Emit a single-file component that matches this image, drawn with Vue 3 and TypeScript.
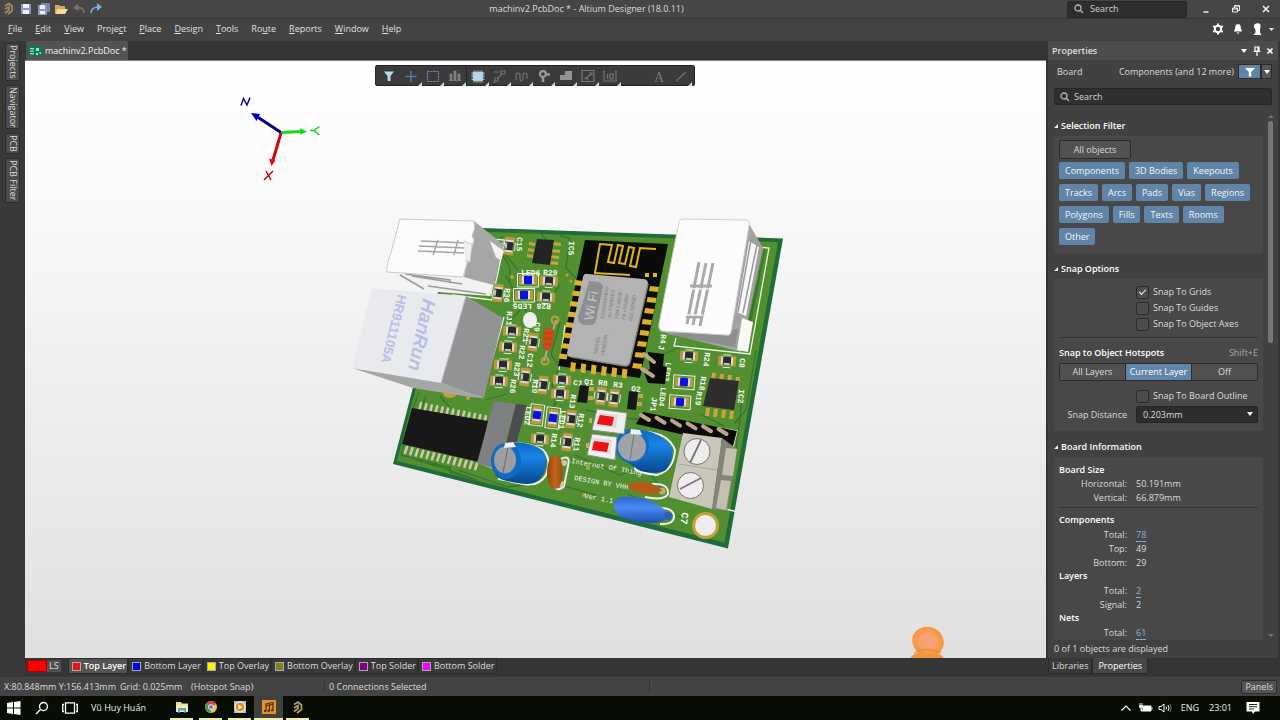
<script setup lang="ts">
import { ref } from 'vue'

interface Menu { label: string; key: number }
interface Layer { label: string; color: string }
interface Smd { x: number; y: number; a: number; led?: boolean }
interface Silk { t: string; x: number; y: number; a: number; s?: number }
interface Info { label: string; value: string; link?: boolean }

const menus: Menu[] = [
  { label: 'File', key: 0 }, { label: 'Edit', key: 0 }, { label: 'View', key: 0 },
  { label: 'Project', key: 5 }, { label: 'Place', key: 0 }, { label: 'Design', key: 0 },
  { label: 'Tools', key: 0 }, { label: 'Route', key: 2 }, { label: 'Reports', key: 0 },
  { label: 'Window', key: 0 }, { label: 'Help', key: 0 },
]
const sideTabs = ['Projects', 'Navigator', 'PCB', 'PCB Filter']
const layers: Layer[] = [
  { label: 'Top Layer', color: '#e81416' }, { label: 'Bottom Layer', color: '#0000f0' },
  { label: 'Top Overlay', color: '#f8f800' }, { label: 'Bottom Overlay', color: '#80801a' },
  { label: 'Top Solder', color: '#800080' }, { label: 'Bottom Solder', color: '#f800f8' },
]
const filters = ['Components', '3D Bodies', 'Keepouts', 'Tracks', 'Arcs', 'Pads', 'Vias', 'Regions', 'Polygons', 'Fills', 'Texts', 'Rooms', 'Other']
const snaps = ref([
  { label: 'Snap To Grids', on: true },
  { label: 'Snap To Guides', on: false },
  { label: 'Snap To Object Axes', on: false },
])
const outline = ref(false)
const hotspot = ref('Current Layer')
const activeLayer = ref('Top Layer')
const distance = ref('0.203mm')
const info: { title: string; rows: Info[]; rule?: boolean }[] = [
  { title: 'Board Size', rule: true, rows: [{ label: 'Horizontal:', value: '50.191mm' }, { label: 'Vertical:', value: '66.879mm' }] },
  { title: 'Components', rows: [{ label: 'Total:', value: '78', link: true }, { label: 'Top:', value: '49' }, { label: 'Bottom:', value: '29' }] },
  { title: 'Layers', rows: [{ label: 'Total:', value: '2', link: true }, { label: 'Signal:', value: '2' }] },
  { title: 'Nets', rows: [{ label: 'Total:', value: '61', link: true }] },
]
const tools = ['filter', 'plus', 'marquee', 'align', 'chip', 'route', 'tune', 'via', 'poly', 'dim', 'pad', 'gap', 'text', 'line']

const smds: Smd[] = [
  { x: 509, y: 246, a: 97 }, { x: 528, y: 280, a: 0, led: true }, { x: 549, y: 281, a: 3 },
  { x: 524, y: 295, a: 0, led: true }, { x: 546, y: 297, a: 3 }, { x: 498, y: 293, a: 97 },
  { x: 512, y: 331, a: 4 }, { x: 508, y: 347, a: 4 }, { x: 503, y: 365, a: 4 }, { x: 499, y: 381, a: 4 },
  { x: 533, y: 342, a: 97 }, { x: 525, y: 377, a: 97 }, { x: 543, y: 385, a: 97 },
  { x: 562, y: 380, a: 4 }, { x: 560, y: 394, a: 4 }, { x: 601, y: 396, a: 97 }, { x: 614, y: 398, a: 97 },
  { x: 689, y: 356, a: 4 }, { x: 727, y: 361, a: 4 }, { x: 684, y: 382, a: 4, led: true },
  { x: 680, y: 402, a: 4, led: true }, { x: 537, y: 415, a: 97, led: true }, { x: 553, y: 418, a: 97, led: true },
  { x: 540, y: 439, a: 5 }, { x: 571, y: 419, a: 97 }, { x: 567, y: 442, a: 97 },
]
const silks: Silk[] = [
  { t: 'C15', x: 517, y: 237, a: 92 }, { t: 'LED6', x: 521, y: 275, a: 2 }, { t: 'R29', x: 543, y: 275, a: 2 },
  { t: 'R36', x: 505, y: 288, a: 95 }, { t: 'LED5', x: 532, y: 304, a: 182 }, { t: 'R28', x: 551, y: 304, a: 182 },
  { t: 'RJ1', x: 507, y: 311, a: 93 }, { t: 'C9', x: 535, y: 322, a: 95 }, { t: 'R21', x: 524, y: 328, a: 95 },
  { t: 'R22', x: 520, y: 345, a: 95 }, { t: 'C12', x: 528, y: 353, a: 95 }, { t: 'R23', x: 515, y: 362, a: 95 },
  { t: 'R26', x: 511, y: 379, a: 95 }, { t: 'R10', x: 533, y: 379, a: 95 }, { t: 'IC5', x: 569, y: 241, a: 93 },
  { t: 'R4', x: 661, y: 334, a: 95 }, { t: 'J', x: 659, y: 345, a: 95 }, { t: 'R24', x: 705, y: 352, a: 97 },
  { t: 'C8', x: 740, y: 358, a: 95 }, { t: 'LED3', x: 666, y: 362, a: 97 }, { t: 'LED4', x: 661, y: 387, a: 97 },
  { t: 'R18', x: 701, y: 376, a: 97 }, { t: 'R19', x: 697, y: 391, a: 97 }, { t: 'IC2', x: 739, y: 389, a: 95 },
  { t: 'C1', x: 573, y: 385, a: 5 }, { t: 'Q1', x: 584, y: 384, a: 5 }, { t: 'R8', x: 598, y: 385, a: 5 },
  { t: 'R3', x: 613, y: 387, a: 5 }, { t: 'Q2', x: 631, y: 391, a: 5 }, { t: 'R13', x: 571, y: 394, a: 97 },
  { t: 'JP1', x: 652, y: 397, a: 97 }, { t: 'LED2', x: 526, y: 406, a: 95 }, { t: 'LED1', x: 561, y: 410, a: 97 },
  { t: 'R14', x: 552, y: 433, a: 97 }, { t: 'R12', x: 579, y: 413, a: 97 }, { t: 'R11', x: 575, y: 437, a: 97 },
  { t: 'C7', x: 682, y: 512, a: 98, s: 10 },
]
const icPins = Array.from({ length: 14 }, (_, i) => i)
const espRight = Array.from({ length: 8 }, (_, i) => ({ x: 655 - i * 2.4, y: 289 + i * 11 }))
const espLeft = Array.from({ length: 8 }, (_, i) => ({ x: 578 - i * 2.2, y: 283 + i * 10.5 }))
const espBottom = Array.from({ length: 6 }, (_, i) => ({ x: 573 + i * 10.3, y: 366 + i * 1.3 }))
const header = Array.from({ length: 6 }, (_, i) => ({ x: 641 + i * 15.5, y: 415 + i * 2.8 }))
</script>

<template>
  <div class="app">
    <header class="titlebar">
      <svg class="quick" width="106" height="18" viewBox="0 0 106 18" aria-hidden="true">
        <path d="M5 6 L9 3.500 L12 6 V11 L8 14 M5 13 L9 10 V7 L5 9" fill="none" stroke="#a28d62" stroke-width="1.800" />
        <path d="M21 4h10v10h-10z" fill="#8f96c8" /><path d="M23 4h6v4h-6zM23 10h6v4h-6z" fill="#f2f2fa" />
        <path d="M41 3h9v9h-9z" fill="#7d83ad" /><path d="M38 5h9v10h-9z" fill="#8f96c8" /><path d="M40 5h5v4h-5zM40 11h5v3h-5z" fill="#eee" />
        <path d="M55 5h4l1 1h5v8h-10z" fill="#d0aa62" /><path d="M57 9h11l-3 5h-9z" fill="#f6dc9a" />
        <path d="M84 13 C84 8 80 7 76 8" fill="none" stroke="#747474" stroke-width="1.600" /><path d="M78 3.500 L73 8 L79 11z" fill="#747474" />
        <path d="M91 13 C91 8 95 7 99 7" fill="none" stroke="#80ade0" stroke-width="1.600" /><path d="M97 3 L102 7 L97 11z" fill="#80ade0" />
      </svg>
      <h1>machinv2.PcbDoc * - Altium Designer (18.0.11)</h1>
      <label class="top-search">
        <svg width="10" height="10" viewBox="0 0 10 10"><circle cx="4" cy="4" r="3" /><path d="M6.300 6.300 9 9" /></svg>
        <input type="text" placeholder="Search" aria-label="Search application">
      </label>
      <div class="win">
        <button aria-label="Minimize"><svg width="10" height="10" viewBox="0 0 10 10"><path d="M2.500 8h5" stroke-width="1.500" /></svg></button>
        <button aria-label="Restore"><svg width="10" height="10" viewBox="0 0 10 10"><path d="M1.500 4h5v4h-5zM1.500 5h5M3.500 4V1.500h5V6.500H6.500M3.500 2h5" /></svg></button>
        <button aria-label="Close"><svg width="10" height="10" viewBox="0 0 10 10"><path d="M2 2l6 6M8 2l-6 6" stroke-width="1.600" /></svg></button>
      </div>
    </header>

    <nav class="menubar">
      <button v-for="m in menus" :key="m.label">{{ m.label.slice(0, m.key) }}<u>{{ m.label[m.key] }}</u>{{ m.label.slice(m.key + 1) }}</button>
      <span class="account">
        <button aria-label="Preferences"><svg width="12" height="12" viewBox="0 0 12 12"><circle cx="6" cy="6" r="3.200" fill="none" stroke="#fff" stroke-width="2" /><path d="M6 .5v2M6 9.500v2M1.200 3.200l1.800 1M9 7.800l1.800 1M1.200 8.800l1.800-1M9 4.200l1.800-1" stroke="#fff" stroke-width="2" /></svg></button>
        <button aria-label="Notifications"><svg width="12" height="12" viewBox="0 0 12 12"><path d="M6 1c-2.500.3-2.700 2-2.800 4L2 8.500h8L8.800 5C8.700 3 8.500 1.300 6 1zM4.500 9.500h3L6 11z" fill="#fff" /></svg></button>
        <button aria-label="Account"><svg width="22" height="14" viewBox="0 0 22 14"><path d="M5 1.200c2.500-.4 4 1 3.600 3.300L8 8v2.500L9.500 13h-8L3.500 10.500V8L2 5C1.500 3 3 1.500 5 1.200z" fill="#fff" /><path d="M17 6h5l-2.500 3z" fill="#e8e8e8" /></svg></button>
      </span>
    </nav>

    <div class="main">
      <aside class="side">
        <button v-for="s in sideTabs" :key="s">{{ s }}</button>
      </aside>

      <main class="center">
        <div class="doctabs">
          <button>
            <svg width="13" height="10" viewBox="0 0 13 10"><path d="M0 0h13v10H0z" fill="#0c7a50" /><path d="M1 2h4v1.200H1zM1 4.500h4v1.200H1zM1 7h4v1.200H1zM7 2h3v3H7zM7 7h2v2H7zM10.500 6H12v2h-1.500z" fill="#a7ddc2" /></svg>
            machinv2.PcbDoc *
          </button>
        </div>

        <section class="canvas" aria-label="3D board view">
          <svg class="scene" viewBox="25 61 1021 597" preserveAspectRatio="xMidYMid slice">
            <defs>
              <linearGradient id="capv" x1="0" y1="0" x2="0" y2="1"><stop offset="0" stop-color="#0f66bd" /><stop offset=".35" stop-color="#1985e6" /><stop offset="1" stop-color="#07468c" /></linearGradient>
              <linearGradient id="lens" x1="0" y1="0" x2="0" y2="1"><stop offset="0" stop-color="#2a64d2" /><stop offset=".4" stop-color="#4a8af2" /><stop offset="1" stop-color="#1c50b4" /></linearGradient>
              <linearGradient id="amber" x1="0" x2="1"><stop offset="0" stop-color="#8c4210" /><stop offset=".5" stop-color="#c2661c" /><stop offset="1" stop-color="#9a4a12" /></linearGradient>
              <radialGradient id="glow"><stop offset="0" stop-color="#f5a08c" /><stop offset=".55" stop-color="#f7a06a" /><stop offset="1" stop-color="#f6953c" /></radialGradient>
            </defs>

            <!-- axes -->
            <g fill="none" stroke-width="3">
              <path d="M281 132.500 256 116" stroke="#00008c" /><path d="M251 113l9 1-3.500 7z" fill="#0000c8" />
              <path d="M281 132.500 302 131.500" stroke="#18d818" /><path d="M300 128l7 3.500-6.500 3.500z" fill="#18e018" />
              <path d="M281 133 273 160" stroke="#c80c0c" /><path d="M269 158.500l6.500 2-4 5.500z" fill="#d81010" />
            </g>
            <g fill="none" stroke-width="1.500"><path d="M241 105.500 243.500 98.500 247 105 250 97.500" stroke="#0b0b8c" /><path d="M319.500 126.500 314 130.500 319.500 135M314 130.500h-4" stroke="#18c818" /><path d="M264 180 273 171M266 171 271 180" stroke="#b01010" /></g>

            <!-- board -->
            <path d="M455 227 783 238.500 728 548.500 393 464z" fill="#1f6b3a" />
            <path d="M457 231 778 242 724.500 542.500 397 461z" fill="#528f31" />
            <g fill="none" stroke="#34752d" stroke-width="1.300">
              <path d="M502 236l-2 12 18 22M515 232l25 1 6 6M560 236l10 2-4 30 12 12M419 392l-8 22M426 396l-5 14 12 10M440 396l10 12M500 250l10 18v16M505 275l22 38M560 284l-14 22M486 400l20-6M458 470l50 17 30-4M414 459l22 7v-5M432 464l45 16M450 466v6l40 13M540 450l20 35 36 10M575 455l45 20 24-9M586 410l38 8 25 2M648 470l14 20M560 322l-9 32 6 10M750 260l10 14-12 60M756 350l-10 60-12 14M700 414l24 12M560 365l-8 20 4 20M628 494l36 18 20 6M742 400l-6 50M765 250l-20 90" />
              <path d="M405 440l-4 15 50 13M500 240l-4 20M520 310l-12 14M556 400l-8 22M660 356l22-10M720 510l-20-6" />
            </g>
            <g fill="#c2a03a"><circle cx="512" cy="277" r="2" /><circle cx="567" cy="275" r="1.500" /><circle cx="571" cy="281" r="1.500" /><circle cx="508" cy="359" r="1.500" /><circle cx="588" cy="468" r="2" /><circle cx="584" cy="495" r="2" /><circle cx="468" cy="398" r="2" /><ellipse cx="450" cy="393" rx="7" ry="5" /></g>

            <!-- silkscreen outlines -->
            <g fill="none" stroke="#eef4e8" stroke-width="1.300">
              <path d="M477 238l28 2-13 60-40-5M504 317l-22 80-50-9M757 247l12 1-19 106-76-8 2-8M565 325l-6 45M477 462l20 8M718 428l19 3-4 16M688 500l50 12" />
            </g>
            <ellipse cx="530" cy="320" rx="7" ry="8" fill="#eee" />

            <g v-for="(p, i) in smds" :key="i" :transform="`translate(${p.x} ${p.y}) rotate(${p.a})`">
              <rect x="-9" y="-5" width="6" height="10" rx="1" fill="#b9993c" /><rect x="3" y="-5" width="6" height="10" rx="1" fill="#b9993c" />
              <path v-if="p.led" d="M-10.500-6.500h21v13.500h-21z" fill="none" stroke="#eef4e8" />
              <path v-else d="M-4-6h8M-4 6.500h8" fill="none" stroke="#e4ecdc" />
              <rect x="-6" y="-4" width="12" height="8" fill="#dcdcd8" />
              <rect x="-4" y="-4" width="8" height="8" :fill="p.led ? '#1010e6' : '#292b2a'" />
              <rect v-if="!p.led" x="-3" y="2" width="6" height="2" fill="#c4c4be" />
            </g>

            <text v-for="s in silks" :key="s.t" class="silk" :font-size="s.s ?? 8" :transform="`translate(${s.x} ${s.y}) rotate(${s.a})`">{{ s.t }}</text>
            <text class="silk thin" font-size="7" transform="translate(571 463) rotate(10)">Internet Of Thing</text>
            <text class="silk thin" font-size="7" transform="translate(574 480) rotate(10)">DESIGN BY VHH</text>
            <text class="silk thin" font-size="7" transform="translate(584 498) rotate(10)">Ver 1.1</text>

            <!-- small ICs -->
            <g fill="#c9a53c">
              <path d="M529 242l6 1v3l-6-1zM528 248l6 1v3l-6-1zM527 254l6 1v3l-6-1zM552 242l9 1v3l-9-1zM551 249l9 1v3l-9-1zM550 255l9 1v3l-9-1zM549 261l9 1v3l-9-1z" />
              <path d="M712 373l4 0-1 8h-4zM720 374h4l-1 8h-4zM728 375h4l-1 8h-4zM736 377h4l-1 8h-4zM706 408h4l-1 8h-4zM714 409h4l-1 8h-4zM722 410h4l-1 8h-4zM730 411h4l-1 8h-4z" />
            </g>
            <path d="M537 239l17 1-4 25-18-2z" fill="#232426" /><path d="M710 378l29 3-5 29-31-4z" fill="#2e2c2d" />
            <path d="M580 385l9 1-2 17-10-1z" fill="#17181a" /><path d="M629 391l9 1-2 18-9-1z" fill="#17181a" />
            <path d="M589 387h5v4h-5zM588 396h5v4h-5zM638 394h5v4h-5zM637 402h5v4h-5z" fill="#c4a94c" />

            <!-- axial resistor -->
            <path d="M556 320 544 361" stroke="#b8aa9a" stroke-width="2" /><circle cx="555" cy="320" r="3.500" fill="none" stroke="#c0a040" stroke-width="2" /><circle cx="545" cy="361" r="3.500" fill="none" stroke="#c0a040" stroke-width="2" />
            <path d="M544 330q4-5 10 0l0 7-2 10q-3 7-9 1l0-8z" fill="#b9541c" /><path d="M545 333h9M543 338.500h10M543 345h9" stroke="#e03a14" stroke-width="2" />

            <!-- Wi-Fi module -->
            <path d="M585 240 668 244 640 378 558 366z" fill="#0b0b09" />
            <path d="M595 273l5-29 12 1-4 17 6 1 4-18 5 1-4 17 6 1 4-17 5 1-4 18 6 1 4-19 16 1M594 273l36 2" fill="none" stroke="#e2b422" stroke-width="2" />
            <path d="M645 273h4v4h-4zM653 273h4v4h-4z" fill="#e2b422" />
            <g fill="#dfb128">
              <path v-for="(p, i) in espRight" :key="'r' + i" :d="`M${p.x - 5} ${p.y - 3}l9 1-1 5-9-1z`" />
              <path v-for="(p, i) in espLeft" :key="'l' + i" :d="`M${p.x - 3} ${p.y - 3}l8 1-1 5-8-1z`" />
              <path v-for="(p, i) in espBottom" :key="'b' + i" :d="`M${p.x - 2} ${p.y - 4}l5 1-1 9-5-1z`" />
            </g>
            <path d="M588 274q-4-1-5 3l-16 76q0 4 4 4l54 9q4 0 5-4l18-78q0-5-5-5z" fill="#b3b3b3" />
            <path d="M648 284l-18 78q-1 4-5 4l-54-9" fill="none" stroke="#868686" stroke-width="1.500" />
            <path d="M589 281q-6 22-11 35 0 8 6 9l8 0q3-1 4-5l7-33q0-6-14-6z" fill="#8c8e90" />
            <text class="print" font-size="13" fill="#c8c8c8" transform="translate(593 321) rotate(-80)">Wi Fi</text>
            <g class="print" font-size="5" fill="#76787a">
              <text transform="translate(604 319) rotate(-82)">ESP8266MOD</text><text transform="translate(611 318) rotate(-82)">AI-THINKER</text><text transform="translate(618 319) rotate(-82)">ISM 2.4GHz</text><text transform="translate(625 320) rotate(-82)">PA +25dBm</text><text transform="translate(632 321) rotate(-82)">802.11b/g/n</text>
              <text transform="translate(597 354) rotate(-80)">MODEL</text><text transform="translate(604 356) rotate(-80)">VENDOR</text>
            </g>

            <!-- left upper jack -->
            <path d="M474 221 504 245 491 292 462 288z" fill="#a7a9a9" /><path d="M490 241l14 10-5 15z" fill="#f3f3f3" />
            <path d="M386 270 424 291 490 296 495 281 460 250z" fill="#f1f1f1" /><path d="M400 275l24 14M412 276l50 8M405 274l45 6v3M428 286l58 8" stroke="#9a9a9a" stroke-width="1.500" fill="none" />
            <path d="M470 240l30 20-6 25-16-4-14-4z" fill="#a4a5a5" />
            <path d="M400 219 474 221q2 8-2 15l2 4-11 37-76-5q-1-5 3-16z" fill="#fbfbfb" stroke="#c9c9c9" stroke-width="1" />
            <path d="M421 241l46 2M419 246l46 2M418 251l46 2M438 240l-5 15M458 240l-4 15" fill="none" stroke="#a6a6a6" stroke-width="1.500" />
            <path d="M464 241l8 3-2 18-5-1" fill="#efefef" stroke="#ccc" />

            <!-- magnetics jack -->
            <path d="M466 296 503 318 484 398 441 382z" fill="#929394" />
            <path d="M352 368 441 382 484 398 470 397 413 388z" fill="#a5a6a6" />
            <path d="M372 288 466 296 441 383 352 368z" fill="#e9eaed" /><path d="M466 296 441 383" stroke="#bfc0c2" />
            <text class="brand" font-size="19" transform="translate(423 298) rotate(102)">HanRun</text>
            <text class="brand plain" font-size="13" transform="translate(398 294) rotate(104)">HR911105A</text>

            <!-- right jack -->
            <path d="M748 222 763 248 741 352 659 331z" fill="#a2a2a2" />
            <path d="M749 241l10 6-13 69-9-4zM742 318l11 4-5 30-11-2z" fill="#f8f8f8" /><path d="M751 240l-13 72M757 245l-14 68" stroke="#999" stroke-width="1.500" />
            <path d="M665 334l70 13 3-18z" fill="#8d8f8f" />
            <path d="M679 222q0-3 4-3l63 1q4 1 3 6l-18 106q-1 4-5 3l-64-4q-4-2-3-7z" fill="#fcfcfc" stroke="#d0d0d0" />
            <path d="M699 262l-12 62M706 263l-13 62M713 263l-13 63M690 286h22M686 317h16" stroke="#a9a9a9" stroke-width="3" fill="none" />
            <path d="M689 289l21 0M686 315l17 0" stroke="#f4f4f4" stroke-width="1.500" fill="none" />

            <!-- two-pin jumper -->
            <path d="M648 352l16 2-1 12 4 1-2 17-17-1-4-11 6-3z" fill="#0b0b0b" /><path d="M644 354l10 8M642 369l11 7" stroke="#b9a887" stroke-width="4" stroke-linecap="round" />

            <!-- wide IC -->
            <g v-for="i in icPins" :key="'ic' + i" stroke="#cfcab2" stroke-width="2.500" stroke-linecap="round">
              <path :d="`M${421 + i * 5.400} ${403 + i * 1.100}l-2 8M${407 + i * 5.400} ${447 + i * 1.250}l-2 6`" />
            </g>
            <path d="M412 408 488 421 479 462 402 444z" fill="#171817" />
            <path d="M494 401 516 404 498 470 477 463z" fill="#7f8081" /><path d="M516 404l11 1-13 47-9-4z" fill="#4b4c4d" />

            <!-- capacitors -->
            <path d="M513 443q17 0 30 7 9 9 3 25-7 12-23 9l-24-5z" fill="none" stroke="#f1f1f1" stroke-width="2" />
            <path d="M509 442q24 0 34 9 6 8 1 22-6 12-18 11-25-2-31-9z" fill="url(#capv)" />
            <ellipse cx="506" cy="461" rx="15" ry="18" fill="#0f6bc4" /><ellipse cx="505" cy="460" rx="11" ry="13.500" fill="#9b9da0" /><path d="M508 447l-5 26" stroke="#686a6c" /><path d="M505 443l8-1 3 5-12 1z" fill="#f2f2f2" />
            <path d="M647 432q22 2 28 18-1 20-18 25-18-2-22-6z" fill="none" stroke="#f1f1f1" stroke-width="2" />
            <path d="M635 429q26 2 37 19 2 12-6 22-9 5-25 1l-13-8z" fill="url(#capv)" />
            <ellipse cx="632" cy="446" rx="17" ry="17" fill="#0f6bc4" /><ellipse cx="632" cy="447" rx="14" ry="14" fill="#a1a3a6" /><path d="M634 434l-4 26" stroke="#737577" /><path d="M631 429l9 1 2 5-12-1z" fill="#eee" />
            <path d="M561 459q10-5 7 7l-4 20q-5 6-10 1" fill="none" stroke="#eee" stroke-width="2" /><circle cx="564" cy="463" r="3" fill="#d7c49c" /><circle cx="561" cy="484" r="3" fill="#d7c49c" />
            <ellipse cx="555" cy="472" rx="8" ry="17" fill="url(#amber)" />
            <path d="M645 497q19 4 23-3 1-11-16-10" fill="none" stroke="#eee" stroke-width="2" /><circle cx="662" cy="491" r="3.500" fill="#caa96a" /><path d="M628 484q18-7 34 6-8 8-25 2-9-3-9-8z" fill="#b55b18" />
            <path d="M660 524q15 1 14-9-2-7-13-7" fill="none" stroke="#eee" stroke-width="2" /><path d="M620 497q32-2 49 17-4 10-20 9-30-2-35-14-1-9 6-12z" fill="url(#lens)" /><circle cx="668" cy="516" r="4" fill="#2a5fb8" />

            <!-- push buttons -->
            <path d="M597 409l30 4-3 21-32-4zM592 434l25 3-2 23-28-5z" fill="#efefef" stroke="#8f8f8f" /><path d="M599 413l19 2-2 13-20-2zM593 438l19 2-2 14-19-3z" fill="#dadada" /><path d="M600 415l14 2-2 9-15-2zM594 441l15 2-2 9-15-2z" fill="#ee0f17" />
            <path d="M589 418h3v5h-3zM586 443h3v5h-3z" fill="#c8ae58" />

            <!-- pin header -->
            <path d="M643 412 737 431 733 446 636 424z" fill="#0b0b0a" />
            <path v-for="(p, i) in header" :key="'h' + i" :d="`M${p.x} ${p.y}l8 5`" stroke="#b9a887" stroke-width="4" stroke-linecap="round" />

            <!-- screw terminal -->
            <path d="M683 433 722 438 712 509 669 497z" fill="#c9c7ba" /><path d="M722 438 737 449 727 511 712 509z" fill="#85837a" />
            <path d="M726 448l11 1-4 27-11-1zM721 480l10 1-5 29-10-2z" fill="#c4c1b3" /><path d="M679 464l38 6" stroke="#a9a698" />
            <circle cx="697" cy="451.500" r="13" fill="#efecef" stroke="#77756e" /><circle cx="690.500" cy="485.500" r="13" fill="#efecef" stroke="#77756e" /><path d="M701 440 690 463M680 489l21-11" stroke="#77757a" stroke-width="1.800" />

            <circle cx="705.500" cy="525.500" r="12" fill="#eee" stroke="#c2a238" stroke-width="3" />

            <ellipse cx="927" cy="660" rx="17" ry="9" fill="#f6973c" /><ellipse cx="928" cy="641.500" rx="15.500" ry="14" fill="url(#glow)" stroke="#f6953c" transform="rotate(25 928 641.500)" /><path d="M914 653q13-7 27 0" fill="none" stroke="#e08a20" />
          </svg>

          <div class="toolbar" role="toolbar">
            <template v-for="t in tools" :key="t">
              <span v-if="t === 'gap'" class="gap"></span>
              <button v-else :aria-label="t" :class="{ sep: t === 'chip' }">
                <svg width="22" height="20" viewBox="0 0 22 20" fill="none" stroke="#747474" stroke-width="1.200">
                  <path v-if="t === 'filter'" d="M6 5.500h10l-3.500 4.500v5h-3v-5z" fill="#b4dcec" stroke="none" />
                  <path v-if="t === 'plus'" d="M11 5v11M5.500 10.500h11" stroke="#5878b0" stroke-width="1.500" />
                  <path v-if="t === 'marquee'" d="M5.500 5.500h11v10h-11z" stroke="#7486cc" stroke-dasharray="2 1" />
                  <path v-if="t === 'align'" d="M6 8h2v6H6zM10 5h2v9h-2zM14 8h2v6h-2zM5 14.500h12" fill="#808080" stroke="#808080" stroke-width=".8" />
                  <path v-if="t === 'chip'" d="M6.500 6.500h9v8h-9zM7 4.500v12M9 4.500v12M11 4.500v12M13 4.500v12M15 4.500v12M4.500 7h13M4.500 9h13M4.500 11h13M4.500 13.500h13" fill="#c2e0ee" stroke="#b0d2e2" stroke-width="1" />
                  <path v-if="t === 'route'" d="M5 6h5M12 5h4v3h-4zM13 8l-4 4v3H6v-3h3M6 15l-1 2" />
                  <path v-if="t === 'tune'" d="M5 14V9q0-2 2-2t2 2v4q0 2 1.500 2t1.500-6q0-2 2-2t2 2v4" />
                  <path v-if="t === 'via'" d="M10 5a3 3 0 1 1-.1 0M10 11v5M13 8.500h4" stroke="#9a9a9a" stroke-width="2.400" />
                  <path v-if="t === 'poly'" d="M5 14V9h5V5h7v9z" fill="#929292" stroke="none" />
                  <path v-if="t === 'dim'" d="M5 4.500h12v11H5zM8 13l6-5M7.500 12h3v2.500M12 7h3v2.500" />
                  <path v-if="t === 'pad'" d="M5 5v10h12V5M4 6l2-1M16 5l2 1M8.500 8v5M11 8h3v5h-3z" />
                  <text v-if="t === 'text'" x="6" y="16" font-family="Liberation Serif, serif" font-size="14" fill="#777" stroke="none">A</text>
                  <path v-if="t === 'line'" d="M6 15 16 6" />
                  <path v-if="t !== 'filter' && t !== 'text'" d="M22 16v4h-4z" fill="#d8d8d8" stroke="none" />
                </svg>
              </button>
            </template>
          </div>
        </section>

        <div class="layertabs">
          <button class="ls"><i></i>LS</button>
          <button v-for="l in layers" :key="l.label" :class="{ on: l.label === activeLayer }" @click="activeLayer = l.label">
            <span class="swatch" :style="{ background: l.color }"></span>{{ l.label }}
          </button>
        </div>
      </main>

      <aside class="panel">
        <div class="panel-title">
          <h2>Properties</h2>
          <button aria-label="Panel menu"><svg width="8" height="8" viewBox="0 0 8 8"><path d="M1 2h6L4 6z" fill="#fff" /></svg></button>
          <button aria-label="Pin"><svg width="8" height="10" viewBox="0 0 8 10"><path d="M2 1h4v4H2zM.5 5.500h7M4 5.500V10M5 1v4" fill="none" stroke="#fff" stroke-width="1.200" /></svg></button>
          <button aria-label="Close panel"><svg width="8" height="8" viewBox="0 0 8 8"><path d="M1.500 1.500l5 5M6.500 1.500l-5 5" stroke="#fff" stroke-width="1.600" /></svg></button>
        </div>
        <div class="body">
          <div class="board">
            <span>Board</span><span class="scope">Components (and 12 more)</span>
            <button class="funnel" aria-label="Filter"><svg width="12" height="10" viewBox="0 0 12 10"><path d="M1 1h10L7.200 5v4.500H4.800V5z" fill="#fff" /></svg></button>
            <button class="drop" aria-label="Filter options"><svg width="8" height="6" viewBox="0 0 8 6"><path d="M1 1h6L4 5z" fill="#fff" /></svg></button>
          </div>
          <label class="search">
            <svg width="10" height="10" viewBox="0 0 10 10"><circle cx="4" cy="4" r="3" /><path d="M6.300 6.300 9 9" /></svg>
            <input type="text" placeholder="Search" aria-label="Search properties">
          </label>

          <div class="scroll">
            <div class="content">
              <h3><i></i>Selection Filter</h3>
              <div class="box filter">
                <button class="all">All objects</button>
                <div class="tags"><button v-for="f in filters" :key="f">{{ f }}</button></div>
              </div>

              <h3><i></i>Snap Options</h3>
              <div class="box snap">
                <label v-for="s in snaps" :key="s.label" class="check"><input v-model="s.on" type="checkbox">{{ s.label }}</label>
                <hr>
                <div class="hot"><b>Snap to Object Hotspots</b><span>Shift+E</span></div>
                <div class="seg">
                  <button v-for="h in ['All Layers', 'Current Layer', 'Off']" :key="h" :class="{ on: h === hotspot }" @click="hotspot = h">{{ h }}</button>
                </div>
                <label class="check"><input v-model="outline" type="checkbox">Snap To Board Outline</label>
                <div class="dist">
                  <label for="distance">Snap Distance</label>
                  <div class="sel">
                    <select id="distance" v-model="distance"><option>0.203mm</option></select>
                    <svg width="8" height="6" viewBox="0 0 8 6"><path d="M1 1h6L4 5z" fill="#fff" /></svg>
                  </div>
                </div>
              </div>

              <h3><i></i>Board Information</h3>
              <div class="box info">
                <section v-for="g in info" :key="g.title" :class="{ rule: g.rule }">
                  <h4>{{ g.title }}</h4>
                  <dl>
                    <div v-for="r in g.rows" :key="r.label"><dt>{{ r.label }}</dt><dd><a v-if="r.link" href="#">{{ r.value }}</a><template v-else>{{ r.value }}</template></dd></div>
                  </dl>
                </section>
              </div>
            </div>
            <div class="bar">
              <svg width="6" height="5" viewBox="0 0 6 5"><path d="M0 4h6L3 1z" fill="#777" /></svg>
              <span></span>
              <svg class="down" width="6" height="5" viewBox="0 0 6 5"><path d="M0 1h6L3 4z" fill="#777" /></svg>
            </div>
          </div>
          <p class="count">0 of 1 objects are displayed</p>
        </div>
        <div class="panel-tabs"><button>Libraries</button><button class="on">Properties</button></div>
      </aside>
    </div>

    <footer class="status">
      <span class="pos">X:80.848mm Y:156.413mm</span><span class="grid">Grid: 0.025mm</span><span class="hs">(Hotspot Snap)</span>
      <span class="conn">0 Connections Selected</span>
      <span class="rest"></span><button>Panels</button>
    </footer>

    <footer class="taskbar">
      <button aria-label="Start"><svg width="14" height="14" viewBox="0 0 14 14"><path d="M0 2l6-1v5.500H0zM7 .9 13.500 0v6.500H7zM0 7.500h6V13l-6-1zM7 7.500h6.500V14L7 13.100z" fill="#fff" /></svg></button>
      <button aria-label="Search Windows"><svg width="14" height="14" viewBox="0 0 14 14"><circle cx="8.500" cy="5.500" r="4" fill="none" stroke="#fff" stroke-width="1.300" /><path d="M5.500 8.500 1 13" stroke="#fff" stroke-width="1.300" /></svg></button>
      <button aria-label="Task view"><svg width="16" height="12" viewBox="0 0 16 12"><path d="M3.500.8h9v10.400h-9zM2 2.500H.7v7H2M14 2.500h1.300v7H14" fill="none" stroke="#fff" stroke-width="1.300" /></svg></button>
      <span class="user">Vũ Huy Huấn</span>
      <button class="task" aria-label="File Explorer"><svg width="14" height="14" viewBox="0 0 14 14"><path d="M1 2h5l1 1.500h6V12H1z" fill="#f2dc92" /><path d="M1 5h12v7H1z" fill="#f8e9b0" /><path d="M3 13V8h8v5H9.500v-2.500h-5V13z" fill="#48a8d0" /></svg></button>
      <button class="task" aria-label="Chrome"><svg width="12" height="12" viewBox="0 0 12 12"><circle cx="6" cy="6" r="6" fill="#e8c33a" /><path d="M6 6 .8 3A6 6 0 0 1 11.200 3z" fill="#d8483a" /><path d="M6 6 .8 3A6 6 0 0 0 5.500 12z" fill="#3c9a54" /><circle cx="6" cy="6" r="2.800" fill="#fff" /><circle cx="6" cy="6" r="2.100" fill="#4a86d8" /></svg></button>
      <button class="task" aria-label="Media Player"><svg width="14" height="14" viewBox="0 0 14 14"><path d="M1 1h12v12H1z" fill="#9fc4e0" /><circle cx="7" cy="7" r="5" fill="#ee8a22" stroke="#fff" /><path d="M5.500 4.500v5l4-2.500z" fill="#fff" /></svg></button>
      <button class="task on" aria-label="Music"><svg width="14" height="14" viewBox="0 0 14 14"><path d="M0 0h14v14H0z" fill="#e8932a" /><path d="M4 11V4l7-1.500V10M4 6l7-1.500M7.500 10.500V4" fill="none" stroke="#4a2c0c" stroke-width="1.200" /><circle cx="3.200" cy="11" r="1.200" fill="#4a2c0c" /><circle cx="6.700" cy="10.800" r="1.200" fill="#4a2c0c" /><circle cx="10.200" cy="10.200" r="1.200" fill="#4a2c0c" /></svg></button>
      <button class="task" aria-label="Altium Designer"><svg width="12" height="14" viewBox="0 0 12 14"><path d="M2 4.500 6 2 9.500 5v4.500L5 13M2 11.500 6 8.500V5.500L2 8" fill="none" stroke="#b5a078" stroke-width="1.700" /></svg></button>
      <span class="rest"></span>
      <svg width="12" height="8" viewBox="0 0 12 8"><path d="M1.500 6.500 6 2l4.500 4.500" fill="none" stroke="#fff" stroke-width="1.200" /></svg>
      <svg class="bat" width="14" height="10" viewBox="0 0 14 10"><path d="M4 3h8v5H4zM13 4.500v2" fill="#fff" stroke="#fff" /><path d="M1 0v2M3 0v2M.5 2.500h3v2h-3zM2 4.500V8h2" fill="#fff" stroke="#fff" stroke-width=".9" /></svg>
      <svg width="14" height="10" viewBox="0 0 14 10"><path d="M1 3.500h2L6 1v8L3 6.500H1z" fill="none" stroke="#fff" /><path d="M8 3.500q1.200 1.500 0 3M10 2q2.200 3 0 6" fill="none" stroke="#fff" /><path d="M12 1q2.500 4 0 8" fill="none" stroke="#777" /></svg>
      <span class="lang">ENG</span><span class="clock">23:01</span>
      <svg class="note" width="14" height="14" viewBox="0 0 14 14"><path d="M.5 1h13v9.500H9L7 13l-1-2.500H.5z" fill="#fff" /><path d="M3 3.500h8M3 5.700h8M3 8h5" stroke="#222" /></svg>
    </footer>
  </div>
</template>

<style>
html, body { background: #353535; }
body { overflow: hidden; }
</style>

<style scoped>
* { box-sizing: border-box; }
.app { display: flex; flex-direction: column; height: 100vh; min-height: 480px; font: 9px/12px "Open Sans", "Noto Sans", sans-serif; color: #dcdcdc; background: #353535; }
button, input, select { font: inherit; color: inherit; border: 0; background: none; padding: 0; margin: 0; outline: 0; }
button { display: flex; align-items: center; justify-content: center; white-space: nowrap; }
h1, h2, h3, h4, p, dl, dd { margin: 0; font-size: inherit; font-weight: 400; }
svg { display: block; flex: none; }

.titlebar { display: flex; align-items: center; flex: none; height: 18px; background: #464646; }
.titlebar h1 { flex: 1; text-align: center; }
.top-search { display: flex; align-items: center; gap: 6px; width: 120px; height: 17px; padding: 0 6px; background: #2e2e2e; border: 1px solid #282828; border-radius: 2px; }
.top-search svg, .search svg { fill: none; stroke: #b4b4b4; stroke-width: 1.300; }
input[type="text"] { width: 100%; min-width: 0; }
input::placeholder { color: #d2d2d2; opacity: 1; }
.win { display: flex; justify-content: space-between; width: 93px; padding: 0 9px 0 14px; }
.win svg { fill: none; stroke: #eee; }

.menubar { display: flex; align-items: center; flex: none; gap: 13px; height: 23px; padding: 0 6px 2px 8px; background: #434343; border-top: 1px solid #363636; color: #e0e0e0; }
.menubar button { display: block; }
.menubar u { text-underline-offset: 1px; }
.account { display: flex; gap: 8px; margin-left: auto; align-items: center; }
.account button { display: flex; }

.main { display: flex; flex: 1; min-height: 0; }
.side { display: flex; flex-direction: column; gap: 4px; flex: none; width: 25px; padding: 2px 5px; background: #393939; }
.side button { writing-mode: vertical-rl; width: 15px; padding: 1px 0; background: #4b4b4b; border: 1px solid #2d2d2d; border-radius: 2px; }
.center { display: flex; flex-direction: column; flex: 1; min-width: 0; }
.doctabs { height: 20px; flex: none; border-bottom: 1px solid #807e82; background: #343434; }
.doctabs button { gap: 3px; height: 19px; margin-left: 1px; padding: 0 1px 0 3px; background: #535353; color: #f2f2f2; border-radius: 2px 2px 0 0; }
.canvas { position: relative; flex: 1; min-height: 0; overflow: hidden; background: linear-gradient(#fff, #fafafa 20%, #e0e0e0); }
.scene { width: 100%; height: 100%; }
.silk { font-family: "Liberation Mono", monospace; font-weight: 700; fill: #f4f8ef; }
.silk.thin { font-weight: 400; }
.print { font-family: "Liberation Sans", Arial, sans-serif; }
.brand { font-family: "Liberation Sans", Arial, sans-serif; font-style: italic; font-weight: 700; fill: #b7bfe2; }
.brand.plain { font-style: normal; }
.toolbar { position: absolute; top: 4px; left: 50%; margin-left: -161px; display: flex; align-items: center; height: 21px; padding: 0 2px; background: #3b3b3b; border: 1px solid #252525; border-radius: 2px; }
.toolbar .sep { border-left: 1px solid #252525; }
.toolbar .gap { width: 27px; }

.layertabs { display: flex; align-items: flex-start; flex: none; height: 18px; padding-left: 2px; background: #353535; }
.layertabs button { height: 16px; gap: 3px; padding: 0 1px 0 3px; border: 1px solid #2b2b2b; background: #383838; }
.layertabs button.on { background: #545454; font-weight: 600; color: #fff; }
.layertabs .ls { gap: 2px; padding: 0 2px 0 0; margin: 2px 7px 0 0; height: 12px; border: 0; background: #505050; }
.ls i { width: 20px; height: 12px; background: #f00; border: 1px solid #a00; }
.swatch { width: 9px; height: 9px; border: 1px solid #aaa; }

.panel { display: flex; flex-direction: column; flex: none; width: 234px; padding: 0 2px; background: #353535; }
.panel-title { display: flex; align-items: center; flex: none; gap: 5px; height: 19px; padding: 0 4px 0 4px; background: #4c4c4c; }
.panel-title h2 { flex: 1; font-weight: 600; }
.body { display: flex; flex-direction: column; flex: 1; min-height: 0; background: #414141; padding: 0 0 0 6px; }
.board { display: flex; align-items: center; flex: none; height: 23px; padding: 0 6px 0 3px; }
.scope { margin-left: auto; margin-right: 4px; }
.funnel { width: 23px; height: 15px; background: #6083a6; border: 1px solid #2b2b2b; }
.drop { width: 11px; height: 15px; background: #555; border: 1px solid #2b2b2b; }
.search { display: flex; align-items: center; flex: none; gap: 4px; height: 17px; margin: 5px 6px 5px 0; padding: 0 5px; background: #2f2f2f; border: 1px solid #262626; border-radius: 2px; }
.scroll { display: flex; flex: 1; min-height: 0; overflow: hidden; }
.content { flex: 1; min-width: 0; }
.bar { display: flex; flex-direction: column; align-items: center; width: 15px; padding-top: 4px; flex: none; }
.bar span { width: 5px; height: 222px; margin-top: 2px; background: #787878; border-radius: 3px; }
.bar .down { margin-top: auto; margin-bottom: 2px; }
h3 { display: flex; align-items: center; gap: 3px; height: 26px; padding-top: 5px; font-weight: 600; color: #fff; }
h3 i { border: solid transparent; border-width: 0 0 4px 4px; border-bottom-color: #eee; }
.box { background: #484848; padding: 4px 5px; }
.filter { height: 117px; }
.all { width: 72px; height: 19px; background: #515151; border: 1px solid #2b2b2b; border-radius: 2px; }
.tags { display: flex; flex-wrap: wrap; gap: 5px 4px; margin-top: 3px; }
.tags button { height: 17px; padding: 0 6px; border-radius: 2px; background: #6185a9; color: #f4f6f8; }
.snap { height: 152px; padding-top: 5px; }
.check { display: flex; align-items: center; gap: 4px; height: 16px; margin-left: 77px; }
.check input { appearance: none; display: grid; place-items: center; width: 13px; height: 13px; background: #4c4c4c; border: 1px solid #2a2a2a; border-radius: 2px; }
.check input:checked::after { content: ""; width: 6px; height: 3px; border: solid #eee; border-width: 0 0 1px 1px; transform: rotate(-45deg); margin-bottom: 2px; }
hr { border: 0; border-top: 1px solid #343434; margin: 5px 0 9px; }
.hot { display: flex; justify-content: space-between; color: #a8a8a8; }
.hot b { font-weight: 600; color: #fff; }
.seg { display: flex; margin: 4px 0 7px; height: 18px; border: 1px solid #2b2b2b; border-radius: 2px; background: #515151; }
.seg button { flex: 1; }
.seg button.on { background: #6185a9; color: #fff; border: solid #2b2b2b; border-width: 0 1px; }
.dist { display: flex; align-items: center; margin-top: 2px; }
.dist label { width: 77px; padding-right: 9px; text-align: right; }
.sel { position: relative; flex: 1; }
.sel select { appearance: none; width: 100%; height: 17px; padding: 0 6px; background: #2d2d2d; border: 1px solid #252525; border-radius: 2px; }
.sel svg { position: absolute; right: 4px; top: 5px; pointer-events: none; }
.info { padding: 7px 5px 0; }
h4 { font-weight: 600; color: #fff; line-height: 11px; }
.info section.rule { border-bottom: 1px solid #343434; margin-bottom: 6px; padding-bottom: 2px; }
dl { padding-top: 2px; }
.info section:not(.rule) dl { padding-top: 3px; }
dl div { display: flex; height: 14px; align-items: center; }
dt { width: 68px; text-align: right; margin-right: 9px; }
dd a { color: #8fb0dc; text-decoration: none; border-bottom: 1px dashed #8fb0dc; }
.count { flex: none; line-height: 18px; }
.panel-tabs { display: flex; flex: none; height: 18px; background: #343434; }
.panel-tabs button { height: 16px; padding: 0 3px; border: 1px solid #2a2a2a; border-top: 0; background: #393939; }
.panel-tabs .on { padding: 0 5px; background: #474747; color: #fff; }

.status { display: flex; align-items: center; flex: none; height: 20px; padding: 0 3px 0 4px; background: #434343; border-top: 1px solid #393939; }
.status span { flex: none; }
.pos { width: 116px; } .grid { width: 71px; } .status .hs { width: 133px; }
.status .conn { width: 325px; padding-left: 4px; border-left: 1px solid #333; }
.status .rest { border-left: 1px solid #333; height: 12px; }
.rest { flex: 1 !important; }
.status button { height: 14px; padding: 0 3px; background: #535353; border: 1px solid #2b2b2b; border-radius: 2px; }

.taskbar { display: flex; align-items: center; flex: none; height: 24px; padding: 0 20px 0 7px; background: #080d05; color: #eee; }
.taskbar > button { width: 14px; height: 24px; margin-right: 14px; }
.taskbar .user { width: 76px; }
.taskbar .task { width: 23px; height: 24px; margin: 0 3px; border-bottom: 2px solid #f2edb0; flex: none; }
.taskbar .task.on { width: 29px; margin: 0; background: #3f423e; }
.bat { margin: 0 5px 0 7px; }
.lang { margin-left: 9px; } .clock { margin-left: 10px; } .note { margin-left: 14px; }
</style>
